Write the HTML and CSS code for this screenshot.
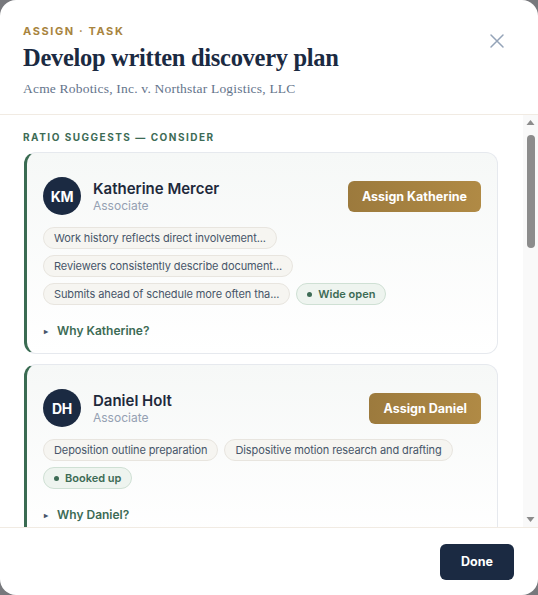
FILE: index.html
```html
<!DOCTYPE html>
<html lang="en">
<head>
    <meta charset="UTF-8">
    <meta name="viewport" content="width=device-width, initial-scale=1.0">
    <title>Assign task</title>
    <link rel="stylesheet" href="styles.css">
</head>
<body>
    <div class="modal">
        <div class="modal-header">
            <div class="eyebrow">Assign · Task</div>
            <h1>Develop written discovery plan</h1>
            <div class="matter">Acme Robotics, Inc. v. Northstar Logistics, LLC</div>
            <button class="close-btn" aria-label="Close">
                <svg width="16" height="16" viewBox="0 0 16 16"><path d="M2 2L14 14M14 2L2 14" stroke="#94a3b8" stroke-width="1.5" stroke-linecap="round"/></svg>
            </button>
        </div>

        <div class="body-wrap">
            <div class="modal-body">
                <div class="section-label">Ratio suggests — consider</div>

                <div class="card">
                    <div class="card-top">
                        <div class="avatar">KM</div>
                        <div class="person">
                            <div class="name">Katherine Mercer</div>
                            <div class="role">Associate</div>
                        </div>
                        <button class="assign-btn">Assign Katherine</button>
                    </div>
                    <div class="chips">
                        <span class="chip">Work history reflects direct involvement...</span>
                        <span class="chip">Reviewers consistently describe document...</span>
                        <span class="chip">Submits ahead of schedule more often tha...</span>
                        <span class="chip chip-status"><i class="dot"></i>Wide open</span>
                    </div>
                    <div class="why"><span class="caret">▸</span>Why Katherine?</div>
                </div>

                <div class="card">
                    <div class="card-top">
                        <div class="avatar">DH</div>
                        <div class="person">
                            <div class="name">Daniel Holt</div>
                            <div class="role">Associate</div>
                        </div>
                        <button class="assign-btn">Assign Daniel</button>
                    </div>
                    <div class="chips">
                        <span class="chip">Deposition outline preparation</span>
                        <span class="chip">Dispositive motion research and drafting</span>
                        <span class="chip chip-status"><i class="dot"></i>Booked up</span>
                    </div>
                    <div class="why"><span class="caret">▸</span>Why Daniel?</div>
                </div>
            </div>

            <!-- scrollbar drawn by hand, the headless browser hides the native one -->
            <div class="scrollbar">
                <svg class="sb-arrow" width="15" height="14" viewBox="0 0 15 14"><path d="M3.5 10L7.5 5L11.5 10Z" fill="#8c8c8c"/></svg>
                <div class="sb-track"><div class="sb-thumb"></div></div>
                <svg class="sb-arrow" width="15" height="14" viewBox="0 0 15 14"><path d="M3.5 4L7.5 9L11.5 4Z" fill="#8c8c8c"/></svg>
            </div>
        </div>

        <div class="modal-footer">
            <button class="done-btn">Done</button>
        </div>
    </div>
</body>
</html>
```

FILE: styles.css
```css
html, body {
    margin: 0;
    padding: 0;
    height: 100%;
}
body {
    background: #77787c;
    font-family: Inter, "Noto Sans", sans-serif;
    overflow: hidden;
}
.modal {
    width: 538px;
    height: 595px;
    background: #ffffff;
    border-radius: 16px;
    display: flex;
    flex-direction: column;
    overflow: hidden;
}
.modal-header {
    position: relative;
    padding: 24px 24px 0 23px;
    height: 90px;
    border-bottom: 1px solid #f1ebe3;
    flex-shrink: 0;
}
.eyebrow {
    font-size: 11px;
    font-weight: 700;
    letter-spacing: 1.6px;
    text-transform: uppercase;
    color: #a8843e;
    line-height: 14px;
}
.modal-header h1 {
    margin: 5px 0 0;
    font-family: "Liberation Serif", "DejaVu Serif", serif;
    font-size: 24.5px;
    font-weight: 700;
    color: #1b2a42;
    line-height: 30px;
    letter-spacing: -0.3px;
}
.matter {
    margin-top: 8px;
    font-family: "Liberation Serif", serif;
    font-size: 13.5px;
    color: #64748b;
    line-height: 16px;
    letter-spacing: 0.2px;
}
.close-btn {
    position: absolute;
    top: 33px;
    right: 33px;
    background: none;
    border: none;
    padding: 0;
    cursor: pointer;
}
.body-wrap {
    position: relative;
    flex: 1;
    min-height: 0;
}
.modal-body {
    height: 100%;
    overflow: hidden;
    box-sizing: border-box;
    padding: 16px 40px 0 24px;
}
.scrollbar {
    position: absolute;
    top: 0;
    right: 0;
    bottom: 0;
    width: 15px;
    background: #f9f9f9;
    display: flex;
    flex-direction: column;
}
.sb-arrow {
    display: block;
    flex-shrink: 0;
}
.sb-track {
    flex: 1;
    padding-top: 6px;
}
.sb-thumb {
    width: 8px;
    height: 113px;
    margin-left: 4px;
    border-radius: 4px;
    background: #8c8c8c;
}
.section-label {
    font-size: 10px;
    font-weight: 700;
    letter-spacing: 1.5px;
    text-transform: uppercase;
    color: #3d6b55;
    line-height: 12px;
    margin: 0 0 9px -1px;
}
.card {
    border: 1px solid #e6e9ee;
    border-left: 3px solid #3a6b52;
    border-radius: 12px;
    background: linear-gradient(180deg, #f6f8f7 0%, #ffffff 100%);
    padding: 24px 16px 15px 16px;
    margin-bottom: 10px;
}
.card-top {
    display: flex;
    align-items: center;
    gap: 12px;
}
.avatar {
    width: 38px;
    height: 38px;
    border-radius: 50%;
    background: #1b2a42;
    color: #ffffff;
    font-size: 14px;
    font-weight: 700;
    display: flex;
    align-items: center;
    justify-content: center;
    letter-spacing: -0.3px;
}
.person {
    flex: 1;
}
.name {
    font-size: 15px;
    font-weight: 600;
    color: #1e293b;
    line-height: 19px;
}
.role {
    font-size: 12px;
    color: #94a0b2;
    line-height: 15px;
}
.assign-btn {
    background: linear-gradient(90deg, #9c7a3d 0%, #b08a45 100%);
    color: #ffffff;
    border: none;
    border-radius: 6px;
    font-family: Inter, sans-serif;
    font-size: 12.5px;
    font-weight: 700;
    padding: 0 14px;
    height: 31px;
    cursor: pointer;
}
.chips {
    display: flex;
    flex-wrap: wrap;
    gap: 6px 6px;
    margin-top: 12px;
}
.chip {
    display: inline-flex;
    align-items: center;
    height: 22px;
    box-sizing: border-box;
    padding: 0 10px;
    border: 1px solid #e8e5df;
    border-radius: 11px;
    background: #f6f5f1;
    font-size: 11px;
    letter-spacing: -0.1px;
    color: #475569;
    white-space: nowrap;
}
.chip-status {
    background: #eef4ef;
    border-color: #cfe0d4;
    color: #3d6b55;
    font-weight: 600;
    letter-spacing: 0;
}
.dot {
    width: 5px;
    height: 5px;
    border-radius: 50%;
    background: #3d6b55;
    margin-right: 6px;
}
.why {
    margin-top: 19px;
    font-size: 12px;
    font-weight: 600;
    color: #3d6b55;
    line-height: 14px;
}
.caret {
    font-size: 8px;
    color: #475569;
    margin: 0 9px 0 1px;
    vertical-align: 1px;
}
.modal-footer {
    flex-shrink: 0;
    border-top: 1px solid #f1ebe3;
    height: 67px;
    display: flex;
    align-items: center;
    justify-content: flex-end;
    padding: 0 24px;
}
.done-btn {
    background: #1b2a42;
    color: #ffffff;
    border: none;
    border-radius: 6px;
    font-family: Inter, sans-serif;
    font-size: 12.5px;
    font-weight: 700;
    width: 74px;
    height: 36px;
    cursor: pointer;
}
```
